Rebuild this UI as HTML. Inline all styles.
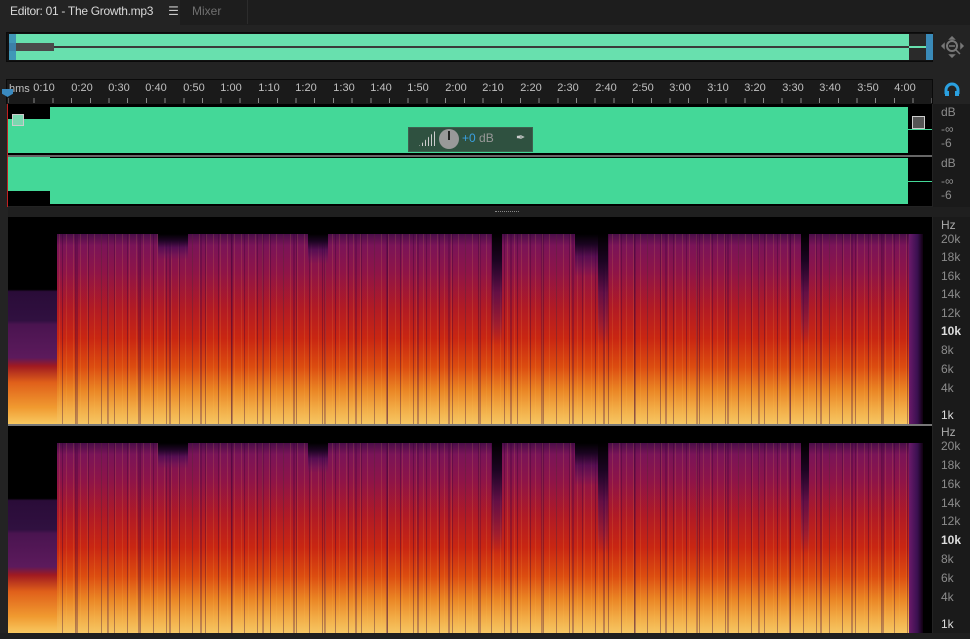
<!DOCTYPE html>
<html><head><meta charset="utf-8"><style>
*{margin:0;padding:0;box-sizing:border-box}
body{width:970px;height:639px;background:#232323;position:relative;overflow:hidden;font-family:"Liberation Sans",sans-serif}
.a{position:absolute}
.tabbar{left:0;top:0;width:970px;height:25px;background:#1d1d1d}
.tab1{left:0;top:0;width:180px;height:25px;background:#232323;color:#d8d8d8;font-size:12px;line-height:23px;padding-left:10px;letter-spacing:-0.3px}
.tab2{left:180px;top:0;width:68px;height:24px;color:#707070;font-size:12px;line-height:23px;padding-left:12px;border-right:1px solid #2c2c2c}
.ov{left:6px;top:32px;width:927px;height:30px;background:#111;border:1px solid #0a0a0a}
.ruler{left:6px;top:79px;width:927px;height:25px;background:#1a1a1a;border:1px solid #0a0a0a;border-bottom:none}
.lbl{position:absolute;top:3px;font-size:11px;color:#c0c0c0;transform:translateX(-50%)}
.wave{left:8px;width:924px;background:#000}
.axis{left:933px;width:37px;background:#1a1a1a}
.al{position:absolute;left:8px;font-size:12px;color:#8c8c8c}
.spec{left:8px;width:924px;background:#000;overflow:hidden}
.sp{position:absolute;left:49px;width:852px;top:17px;bottom:0;
background:
repeating-linear-gradient(90deg,rgba(0,0,0,0) 0 5px,rgba(50,0,50,.35) 5px 6px,rgba(0,0,0,0) 6px 13px),
repeating-linear-gradient(90deg,rgba(0,0,0,0) 0 2px,rgba(255,200,80,.12) 2px 3px,rgba(0,0,0,0) 3px 7px),
repeating-linear-gradient(90deg,rgba(0,0,0,0) 0 19px,rgba(60,0,60,.3) 19px 21px,rgba(0,0,0,0) 21px 31px),
linear-gradient(180deg,#4a0e48 0%,#7a1458 6%,#8e1448 20%,#b01a26 38%,#c92612 55%,#dc4c10 70%,#ea8424 82%,#f2ac46 92%,#f6c664 100%)}
.lp{position:absolute;left:0;width:49px;top:0;bottom:0;background:linear-gradient(180deg,#000 0%,#000 35%,#2a0c38 36%,#301040 50%,#4a1450 52%,#5c1a5c 68%,#a01a20 72%,#e0601a 80%,#f09a30 92%,#f8c860 100%)}
.fade{position:absolute;left:901px;width:14px;top:17px;bottom:0;background:linear-gradient(90deg,#6a1a6a,#3a1050 60%,#100010)}
.band{position:absolute;top:17px;background:linear-gradient(180deg,#000 0%,#1a0420 20%,rgba(60,10,80,.6) 45%,rgba(90,20,90,.3) 70%,rgba(0,0,0,0) 85%)}
</style></head><body>
<div class="a tabbar"></div>
<div class="a tab1">Editor: 01 - The Growth.mp3 <span style="margin-left:12px;color:#ccc">☰</span></div>
<div class="a tab2">Mixer</div>

<div class="a ov">
 <div class="a" style="left:2px;top:1px;width:900px;height:26px;background:#68e0ae"></div>
 <div class="a" style="left:2px;top:13px;width:900px;height:2px;background:#3a3a3a"></div>
 <div class="a" style="left:2px;top:10px;width:45px;height:8px;background:#4a4a4a"></div>
 <div class="a" style="left:902px;top:1px;width:18px;height:26px;background:#2a2a2a"></div>
 <div class="a" style="left:902px;top:13px;width:18px;height:2px;background:#68e0ae"></div>
 <div class="a" style="left:2px;top:1px;width:7px;height:26px;background:#3a8ab8;opacity:.85"></div>
 <div class="a" style="left:919px;top:1px;width:7px;height:26px;background:#3a8ab8"></div>
</div>
<svg class="a" style="left:941px;top:36px" width="24" height="22" viewBox="0 0 24 22"><circle cx="11" cy="10" r="5" fill="none" stroke="#777" stroke-width="2"/><path d="M14 13l5 5M8 10h6M11 1l-2 2h4zM11 21l-2-2h4zM1 10l2-2v4zM22 10l-2-2v4z" stroke="#777" stroke-width="1.5" fill="#777"/></svg>

<div class="a ruler">
<span class="lbl" style="transform:none;left:2px">hms</span>
</div>
<svg class="a" style="left:944px;top:82px" width="16" height="16" viewBox="0 0 16 16"><path d="M2 12V8a6 6 0 0 1 12 0v4" fill="none" stroke="#2aa0e0" stroke-width="3"/><rect x="1" y="9" width="4" height="5" fill="#2aa0e0"/><rect x="11" y="9" width="4" height="5" fill="#2aa0e0"/></svg>
<div class="a" style="left:2px;top:89px;width:11px;height:8px;background:#3a8ac0;clip-path:polygon(0 0,100% 0,100% 60%,50% 100%,0 60%)"></div>

<!-- waveforms -->
<div class="a wave" style="top:104px;height:51px">
 <div class="a" style="left:42px;top:3px;width:858px;height:46px;background:#44d898"></div>
 <div class="a" style="left:0;top:15px;width:42px;height:34px;background:#44d898"></div>
 <div class="a" style="left:4px;top:10px;width:12px;height:12px;border:1px solid #ccc;background:#7ad8b0"></div>
 <div class="a" style="left:904px;top:12px;width:13px;height:13px;border:1px solid #ccc;background:#555"></div>
 <div class="a" style="left:900px;top:25px;width:24px;height:1px;background:#44d898"></div>
</div>
<div class="a" style="left:7px;top:104px;width:1px;height:103px;background:#c02020"></div>
<div class="a" style="left:8px;top:155px;width:924px;height:2px;background:#666"></div>
<div class="a wave" style="top:157px;height:49px">
 <div class="a" style="left:42px;top:1px;width:858px;height:46px;background:#44d898"></div>
 <div class="a" style="left:0;top:0;width:42px;height:34px;background:#44d898"></div>
 <div class="a" style="left:900px;top:24px;width:24px;height:1px;background:#44d898"></div>
</div>
<div class="a" style="left:408px;top:127px;width:125px;height:25px;background:#2e4a3c;opacity:.95;border:1px solid #3e5a4c"></div>
<div class="a" style="left:419px;top:131px;width:16px;height:15px;background:linear-gradient(90deg,#ccc 0 1px,transparent 1px 3px);background-size:3px 100%;clip-path:polygon(0 100%,100% 0,100% 100%)"></div>
<div class="a" style="left:439px;top:129px;width:20px;height:20px;border-radius:50%;background:#999"></div>
<div class="a" style="left:448px;top:131px;width:2px;height:9px;background:#222"></div>
<div class="a" style="left:462px;top:131px;font-size:12px;color:#3aa0e0">+0 <span style="color:#999">dB</span></div>
<div class="a" style="left:516px;top:131px;color:#ccc;font-size:11px">✒</div>

<div class="a axis" style="top:104px;height:103px">
 <span class="al" style="top:1px">dB</span><span class="al" style="top:18px">-∞</span><span class="al" style="top:32px">-6</span>
 <span class="al" style="top:52px">dB</span><span class="al" style="top:70px">-∞</span><span class="al" style="top:84px">-6</span>
</div>
<div class="a" style="left:8px;top:207px;width:962px;height:10px;background:#1f1f1f"></div>
<div class="a" style="left:495px;top:211px;width:24px;height:1px;border-top:1px dotted #888"></div>

<div class="a spec" style="top:217px;height:207px">
 <div class="lp"></div><div class="sp"></div>
 <div class="band" style="left:484px;width:10px;height:130px"></div>
 <div class="band" style="left:567px;width:28px;height:50px"></div>
 <div class="band" style="left:590px;width:10px;height:130px"></div>
 <div class="band" style="left:793px;width:8px;height:130px"></div>
 <div class="band" style="left:300px;width:20px;height:35px"></div>
 <div class="band" style="left:150px;width:30px;height:30px"></div>
 <div class="fade"></div>
</div>
<div class="a" style="left:8px;top:424px;width:924px;height:2px;background:#777"></div>
<div class="a spec" style="top:426px;height:207px">
 <div class="lp"></div><div class="sp"></div>
 <div class="band" style="left:484px;width:10px;height:130px"></div>
 <div class="band" style="left:567px;width:28px;height:50px"></div>
 <div class="band" style="left:590px;width:10px;height:130px"></div>
 <div class="band" style="left:793px;width:8px;height:130px"></div>
 <div class="band" style="left:300px;width:20px;height:35px"></div>
 <div class="band" style="left:150px;width:30px;height:30px"></div>
 <div class="fade"></div>
</div>
<div class="a" style="left:0;top:633px;width:970px;height:6px;background:#1f1f1f"></div>

<div class="a axis" style="top:217px;height:416px">
 <span class="al" style="top:1px;color:#aaa">Hz</span>
 <span class="al" style="top:15px">20k</span><span class="al" style="top:33px">18k</span><span class="al" style="top:52px">16k</span><span class="al" style="top:70px">14k</span><span class="al" style="top:89px">12k</span><span class="al" style="top:107px;color:#ddd;font-weight:bold">10k</span><span class="al" style="top:126px">8k</span><span class="al" style="top:145px">6k</span><span class="al" style="top:164px">4k</span><span class="al" style="top:191px;color:#ddd">1k</span>
 <span class="al" style="top:208px;color:#aaa">Hz</span>
 <span class="al" style="top:222px">20k</span><span class="al" style="top:241px">18k</span><span class="al" style="top:260px">16k</span><span class="al" style="top:279px">14k</span><span class="al" style="top:297px">12k</span><span class="al" style="top:316px;color:#ddd;font-weight:bold">10k</span><span class="al" style="top:335px">8k</span><span class="al" style="top:354px">6k</span><span class="al" style="top:373px">4k</span><span class="al" style="top:400px;color:#ddd">1k</span>
</div>

<div class="a" style="left:0;top:79px;width:933px;height:25px">
<span class="lbl" style="left:44px">0:10</span><span class="lbl" style="left:82px">0:20</span><span class="lbl" style="left:119px">0:30</span><span class="lbl" style="left:156px">0:40</span><span class="lbl" style="left:194px">0:50</span><span class="lbl" style="left:231px">1:00</span><span class="lbl" style="left:269px">1:10</span><span class="lbl" style="left:306px">1:20</span><span class="lbl" style="left:344px">1:30</span><span class="lbl" style="left:381px">1:40</span><span class="lbl" style="left:418px">1:50</span><span class="lbl" style="left:456px">2:00</span><span class="lbl" style="left:493px">2:10</span><span class="lbl" style="left:531px">2:20</span><span class="lbl" style="left:568px">2:30</span><span class="lbl" style="left:606px">2:40</span><span class="lbl" style="left:643px">2:50</span><span class="lbl" style="left:680px">3:00</span><span class="lbl" style="left:718px">3:10</span><span class="lbl" style="left:755px">3:20</span><span class="lbl" style="left:793px">3:30</span><span class="lbl" style="left:830px">3:40</span><span class="lbl" style="left:868px">3:50</span><span class="lbl" style="left:905px">4:00</span>
<div class="a" style="left:8px;top:19px;width:924px;height:5px;background:repeating-linear-gradient(90deg,transparent 0 17.7px,#8a8a8a 17.7px 18.7px);background-position:8px 0"></div>
</div>
</body></html>
